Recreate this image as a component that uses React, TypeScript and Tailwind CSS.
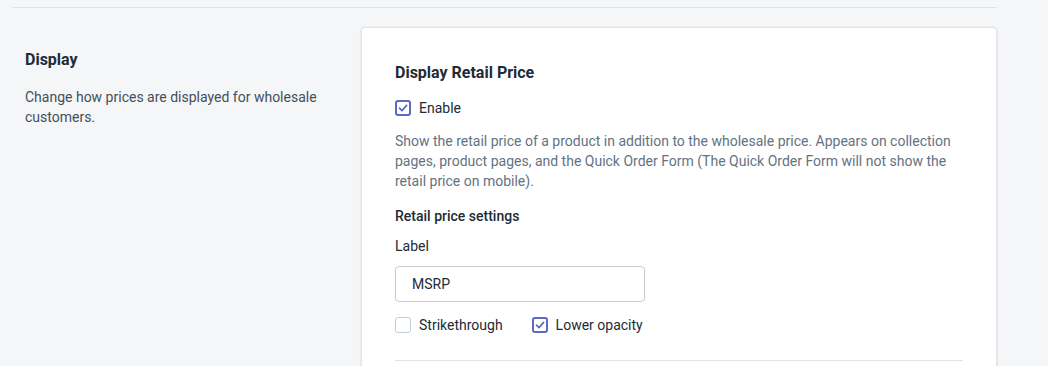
import React from "react";

function Check({ checked }: { checked: boolean }) {
  if (checked) {
    return (
      <span className="flex h-4 w-4 shrink-0 items-center justify-center rounded-[3px] border-2 border-[#5c6ac4] bg-white">
        <svg width="10" height="10" viewBox="0 0 10 10" fill="none">
          <path d="M1.5 5.2 L4 7.6 L8.6 2.4" stroke="#5c6ac4" strokeWidth="1.7" strokeLinecap="round" strokeLinejoin="round" />
        </svg>
      </span>
    );
  }
  return <span className="block h-4 w-4 shrink-0 rounded-[3px] border border-[#c4cdd5] bg-white" />;
}

export default function App() {
  return (
    <div className="min-h-[366px] w-full bg-[#f4f6f8] font-['Roboto',sans-serif]">
      <div className="ml-3 w-[985px] pt-[7px]">
        <div className="h-px bg-[#dfe3e8]" />
        <div className="mt-[19px] flex items-start">
          <div className="w-[349px] shrink-0 pl-[13px] pr-[24px] pt-[23px]">
            <h2 className="text-[16px] font-bold leading-5 text-[#212b36]">Display</h2>
            <p className="mt-[17px] text-[14px] leading-5 text-[#454f5b]">
              Change how prices are displayed for wholesale customers.
            </p>
          </div>
          <div className="w-[636px] shrink-0 rounded-[4px] border border-[#e3e5e8] bg-white px-[33px] pb-0 pt-[35px] shadow-[0_0_0_1px_rgba(63,63,68,0.03),0_1px_3px_0_rgba(63,63,68,0.08)]">
            <h3 className="text-[16px] font-bold leading-5 text-[#212b36]">Display Retail Price</h3>
            <label className="mt-[15px] flex items-center gap-2 text-[14px] leading-5 text-[#212b36]">
              <Check checked />
              <span>Enable</span>
            </label>
            <p className="mt-[13px] text-[14px] leading-5 text-[#637381]">
              Show the retail price of a product in addition to the wholesale price. Appears on collection pages, product pages, and the Quick Order Form (The Quick Order Form will not show the retail price on mobile).
            </p>
            <h4 className="mt-[15px] text-[14px] font-medium leading-5 text-[#212b36]">Retail price settings</h4>
            <div className="mt-[10px] text-[14px] leading-5 text-[#212b36]">Label</div>
            <div className="mt-[10px] flex h-9 w-[250px] items-center rounded-[4px] border border-[#c4cdd5] bg-white px-4 text-[14px] text-[#212b36]">
              MSRP
            </div>
            <div className="mt-[13px] flex items-center text-[14px] leading-5 text-[#212b36]">
              <label className="flex items-center gap-2">
                <Check checked={false} />
                <span>Strikethrough</span>
              </label>
              <label className="ml-[29px] flex items-center gap-2">
                <Check checked />
                <span>Lower opacity</span>
              </label>
            </div>
            <div className="mt-[25px] h-px bg-[#dfe3e8]" />
            <div className="h-6" />
          </div>
        </div>
      </div>
    </div>
  );
}
